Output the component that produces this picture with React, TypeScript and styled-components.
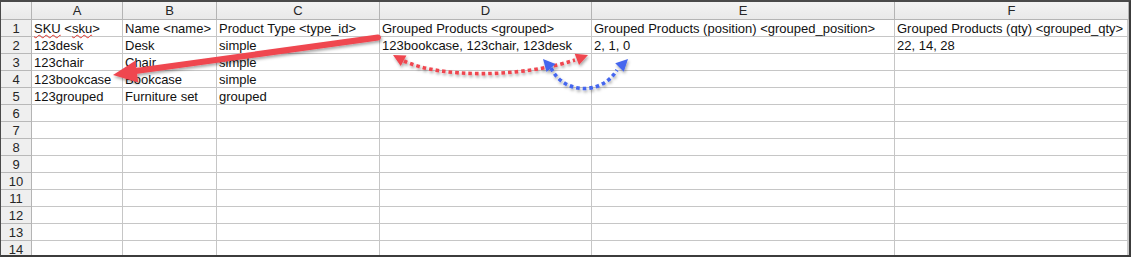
import React from "react";
import styled, { createGlobalStyle } from "styled-components";

const GlobalStyle = createGlobalStyle`
  html, body { margin: 0; padding: 0; background: #ffffff; }
  body { font-family: "Liberation Sans", Arial, sans-serif; }
`;

const COLS = ["A", "B", "C", "D", "E", "F"];
const COL_WIDTHS = "31px 91px 94px 163px 212px 303px 1fr";

type Cell = { text: string };

const DATA: string[][] = [
  [
    "SKU <sku>",
    "Name <name>",
    "Product Type <type_id>",
    "Grouped Products <grouped>",
    "Grouped Products (position) <grouped_position>",
    "Grouped Products (qty) <grouped_qty>",
  ],
  ["123desk", "Desk", "simple", "123bookcase, 123chair, 123desk", "2, 1, 0", "22, 14, 28"],
  ["123chair", "Chair", "simple", "", "", ""],
  ["123bookcase", "Bookcase", "simple", "", "", ""],
  ["123grouped", "Furniture set", "grouped", "", "", ""],
];

const ROW_COUNT = 14;

const Frame = styled.div`
  position: relative;
  width: 1131px;
  height: 257px;
  overflow: hidden;
`;

const Sheet = styled.div`
  box-sizing: border-box;
  width: 1131px;
  height: 257px;
  border-top: 2px solid #4a4a4a;
  border-left: 1px solid #4a4a4a;
  border-right: 2px solid #3c3c3c;
  border-bottom: 2px solid #3c3c3c;
  box-shadow: inset -2px 0 0 #c9c9c9;
  overflow: hidden;
  display: grid;
  grid-template-columns: ${COL_WIDTHS};
  grid-auto-rows: 17px;
  grid-template-rows: 18px;
  font-family: "Liberation Sans", Arial, sans-serif;
  font-size: 13px;
  color: #000;
`;

const HeaderCell = styled.div`
  box-sizing: border-box;
  background: linear-gradient(#f3f3f3, #e9e9e9);
  border-right: 1px solid #b4b4b4;
  border-bottom: 1px solid #b4b4b4;
  color: #262626;
  text-align: center;
  line-height: 17px;
`;

const RowLabel = styled.div`
  box-sizing: border-box;
  background: #efefef;
  border-right: 1px solid #b4b4b4;
  border-bottom: 1px solid #b8b8b8;
  color: #262626;
  text-align: center;
  line-height: 17px;
`;

const DataCell = styled.div<{ $last?: boolean }>`
  box-sizing: border-box;
  border-right: ${(p) => (p.$last ? "none" : "1px solid #c6c6c6")};
  border-bottom: 1px solid #c6c6c6;
  padding-left: 2px;
  line-height: 17px;
  white-space: nowrap;
  color: #111;
`;

// Spell-check squiggle under an unknown word
const Misspelt = styled.span`
  text-decoration-line: underline;
  text-decoration-style: wavy;
  text-decoration-color: #e3342c;
  text-decoration-thickness: 1px;
  text-underline-offset: 1px;
`;

const Overlay = styled.svg`
  position: absolute;
  top: 0;
  left: 0;
  pointer-events: none;
`;

// Triangle points for an arrowhead with its tip at (tx, ty), pointing away from (fx, fy).
function arrowHead(tx: number, ty: number, fx: number, fy: number, len: number, half: number) {
  const dx = tx - fx;
  const dy = ty - fy;
  const d = Math.hypot(dx, dy);
  const ux = dx / d;
  const uy = dy / d;
  const bx = tx - ux * len;
  const by = ty - uy * len;
  const px = -uy;
  const py = ux;
  return `${tx},${ty} ${bx + px * half},${by + py * half} ${bx - px * half},${by - py * half}`;
}

function renderCellText(text: string) {
  if (text === "SKU <sku>") {
    return (
      <>
        <Misspelt>SKU</Misspelt> &lt;<Misspelt>sku</Misspelt>&gt;
      </>
    );
  }
  return text;
}

const Annotations: React.FC = () => {
  const red = "#ef4650";
  const blue = "#4466ee";
  return (
    <Overlay width={1131} height={257} viewBox="0 0 1131 257">
      <defs>
        <filter id="softShadow" x="-10%" y="-50%" width="120%" height="200%">
          <feDropShadow dx="1" dy="2" stdDeviation="1.6" floodColor="#000" floodOpacity="0.35" />
        </filter>
      </defs>
      <g filter="url(#softShadow)">
        {/* SKU link from the grouped list back to the child products */}
        <line x1={378} y1={37.5} x2={132} y2={71.5} stroke={red} strokeWidth={6} strokeLinecap="round" />
        <polygon points={arrowHead(113, 75, 378, 37.5, 24, 11)} fill={red} />

        {/* red dotted: grouped list <-> position list */}
        <path
          d="M 404 61 C 440 78, 520 78, 575 60"
          fill="none"
          stroke={red}
          strokeWidth={3.6}
          strokeDasharray="3.6 3"
        />
        <polygon points={arrowHead(393, 55, 406, 62, 12, 6)} fill={red} />
        <polygon points={arrowHead(588, 55, 574, 60.5, 12, 6)} fill={red} />

        {/* blue dotted: 123desk <-> its position */}
        <path
          d="M 551 68 C 564 95, 602 95, 617 70"
          fill="none"
          stroke={blue}
          strokeWidth={3.6}
          strokeDasharray="3.6 3"
        />
        <polygon points={arrowHead(543, 59, 552, 69, 12, 6)} fill={blue} />
        <polygon points={arrowHead(628, 59, 617, 70, 12, 6)} fill={blue} />
      </g>
    </Overlay>
  );
};

export default function App() {
  const rows: Cell[][] = Array.from({ length: ROW_COUNT }, (_, r) =>
    COLS.map((_, c) => ({ text: DATA[r]?.[c] ?? "" }))
  );

  return (
    <>
      <GlobalStyle />
      <Frame>
        <Sheet>
          <HeaderCell />
          {COLS.map((c) => (
            <HeaderCell key={c}>{c}</HeaderCell>
          ))}
          {rows.map((row, r) => (
            <React.Fragment key={r}>
              <RowLabel>{r + 1}</RowLabel>
              {row.map((cell, c) => (
                <DataCell key={c} $last={c === COLS.length - 1}>
                  {renderCellText(cell.text)}
                </DataCell>
              ))}
            </React.Fragment>
          ))}
        </Sheet>
        <Annotations />
      </Frame>
    </>
  );
}
